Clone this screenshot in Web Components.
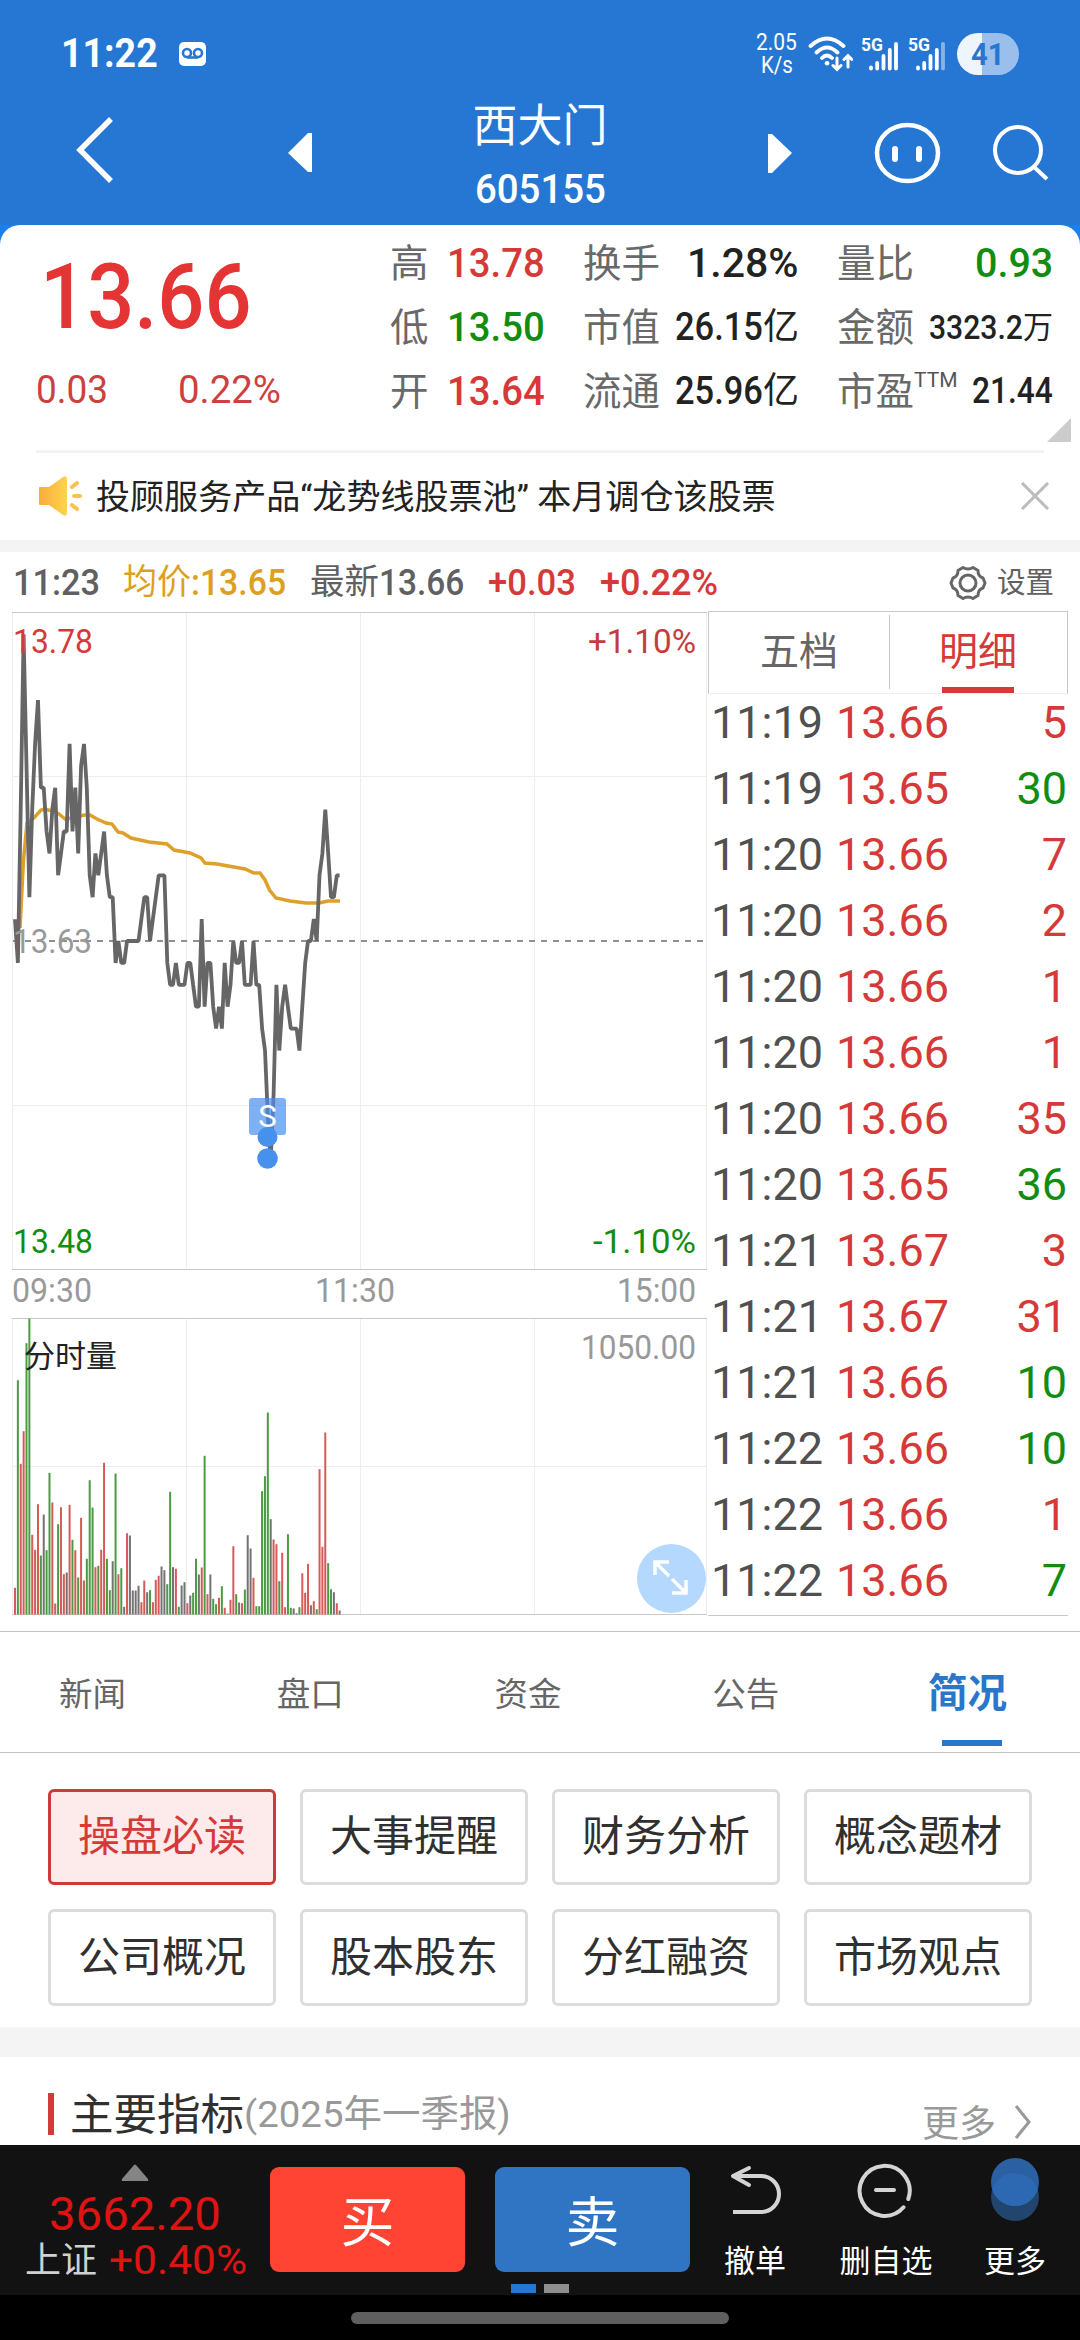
<!DOCTYPE html>
<html lang="zh-CN">
<head>
<meta charset="utf-8">
<title>西大门 605155</title>
<style>
  html, body { margin: 0; padding: 0; }
  body {
    width: 1080px;
    height: 2340px;
    overflow: hidden;
    background: #fff;
    font-family: Roboto, "Noto Sans CJK SC", sans-serif;
  }
</style>
</head>
<body>
<stock-app></stock-app>

<script>
const RED = "#d53a38";
const GREEN = "#128d12";

// text squeezed or stretched to a fixed width, for the narrow numerals
class FitText extends HTMLElement {
  constructor() {
    super();
    this.attachShadow({ mode: "open" });
    this.shadowRoot.innerHTML = `
      <style>
        :host { display: block; flex: none; line-height: 1.2; white-space: nowrap; }
        span { display: inline-block; transform-origin: 0 50%; vertical-align: top; }
      </style>
      <span><slot></slot></span>
    `;
  }

  connectedCallback() {
    const span = this.shadowRoot.querySelector("span");
    const width = Number(this.getAttribute("w"));
    if (this.hasAttribute("size")) this.style.fontSize = `${this.getAttribute("size")}px`;
    this.style.width = `${width}px`;
    const natural = span.offsetWidth;
    if (natural) span.style.transform = `scaleX(${width / natural})`;
  }
}
customElements.define("fit-text", FitText);

class StatusBar extends HTMLElement {
  constructor() {
    super();
    this.attachShadow({ mode: "open" });
    this.shadowRoot.innerHTML = `
      <style>
        :host { display: flex; align-items: center; height: 108px; padding: 0 61px 0 61px; box-sizing: border-box; color: #fff; }
        .time { font-weight: 700; }
        .mail { margin-left: 21px; }
        .rate { margin-left: auto; display: flex; flex-direction: column; align-items: center; margin-right: 11px; }
        .rate fit-text { line-height: 23px; }
        .sig { margin-left: 8px; display: flex; }
        .battery { margin-left: 11px; width: 62px; height: 42px; border-radius: 21px; background: linear-gradient(90deg, #eef5fd 25px, #9abfec 25px); display: flex; align-items: center; justify-content: center; color: #2577d3; font-weight: 700; }
      </style>
      <fit-text class="time" w="97" size="41">11:22</fit-text>
      <svg class="mail" width="27" height="24" viewBox="0 0 27 24">
        <rect width="27" height="24" rx="5" fill="#fff"/>
        <g fill="none" stroke="#2577d3" stroke-width="2.6"><circle cx="8" cy="11" r="4"/><circle cx="19" cy="11" r="4"/><path d="M8 15.5h11"/></g>
      </svg>
      <div class="rate"><fit-text w="41" size="23">2.05</fit-text><fit-text w="32" size="23">K/s</fit-text></div>
      <svg width="45" height="36" viewBox="0 0 45 36" fill="none" stroke="#fff" stroke-width="3.8" stroke-linecap="round">
        <path d="M2.500 10Q19-5 35.500 10M8.500 16.500Q19 6.500 29.500 16.500M14 22q5-5 10 0"/>
        <path d="M19 27.200h.1" stroke-width="4.500"/>
        <path d="M29 22v11M25 29.500l4 4 4-4M40 31V20M36 23.500l4-4 4 4" stroke-width="3"/>
      </svg>
      <svg class="sig" width="40" height="36" viewBox="0 0 40 36" stroke="#fff" stroke-width="3.8" stroke-linecap="round">
        <text x="0" y="15" font-size="18" font-weight="700" fill="#fff" stroke="none" textLength="22" lengthAdjust="spacingAndGlyphs">5G</text>
        <path d="M10 31.500v1M16.200 27v5.500M22.500 20v12.500M28.800 14v18.500M35 8v24.500"/>
      </svg>
      <svg class="sig" width="38" height="36" viewBox="0 0 38 36" stroke="#fff" stroke-width="3.8" stroke-linecap="round" style="margin-left:7px">
        <text x="0" y="15" font-size="18" font-weight="700" fill="#fff" stroke="none" textLength="22" lengthAdjust="spacingAndGlyphs">5G</text>
        <path d="M10 31.500v1M16.200 27v5.500M22.500 20v12.500M28.800 14v18.500"/><path d="M35 8v24.500" opacity=".45"/>
      </svg>
      <div class="battery"><fit-text w="34" size="32">41</fit-text></div>
    `;
  }
}
customElements.define("status-bar", StatusBar);

class StockHeader extends HTMLElement {
  constructor() {
    super();
    this.attachShadow({ mode: "open" });
    this.shadowRoot.innerHTML = `
      <style>
        :host { display: block; height: 225px; background: #2577d3; color: #fff; }
        nav { display: grid; grid-template-columns: 211px 178px 302px 176px 106px 107px; height: 117px; }
        svg { display: block; }
        .back { margin: 8px 0 0 75px; }
        .prev { margin: 25px 0 0 77px; }
        .next { margin: 26px 0 0 77px; }
        .bot { margin: 13px 0 0 6px; }
        .search { margin: 16px 0 0 18px; }
        .name { display: flex; flex-direction: column; align-items: center; }
        .name .cn { line-height: 62px; margin-top: -12px; }
        .name .code { font-weight: 500; line-height: 60px; margin-top: 1px; }
      </style>
      <status-bar></status-bar>
      <nav>
        <svg class="back" width="40" height="68"><path d="M36 3 5 34 36 65" fill="none" stroke="#fff" stroke-width="5.500"/></svg>
        <svg class="prev" width="24" height="39"><path d="M24 0v39h-4L0 20 20 0z" fill="#fff"/></svg>
        <div class="name"><fit-text class="cn" w="135" size="45">西大门</fit-text><fit-text class="code" w="131" size="41">605155</fit-text></div>
        <svg class="next" width="24" height="39"><path d="M0 0v39h4l20-20L4 0z" fill="#fff"/></svg>
        <svg class="bot" width="70" height="64" fill="none" stroke="#fff"><rect x="4" y="4" width="61" height="56" rx="30.500" ry="28" stroke-width="4.500"/><path d="M22 28v10M46 28v10" stroke-width="6" stroke-linecap="round"/></svg>
        <svg class="search" width="58" height="60" fill="none" stroke="#fff" stroke-width="4"><circle cx="27" cy="26" r="23"/><path d="M42 42l14 13"/></svg>
      </nav>
    `;
  }
}
customElements.define("stock-header", StockHeader);

class StatRow extends HTMLElement {
  constructor() {
    super();
    this.attachShadow({ mode: "open" });
    this.shadowRoot.innerHTML = `
      <style>
        :host { display: flex; align-items: center; height: 64px; color: #222; font-weight: 500; font-size: 38.500px; }
        .label { color: #696969; font-weight: 400; line-height: 1; white-space: nowrap; }
        slot { display: flex; align-items: center; margin-left: auto; }
        sup { font-size: 21px; line-height: 1; margin-top: -24px; color: #555; font-weight: 400; vertical-align: baseline; }
      </style>
      <span class="label">${this.getAttribute("label")}</span>
      ${this.hasAttribute("note") ? `<sup>${this.getAttribute("note")}</sup>` : ""}
      <slot></slot>
    `;
  }
}
customElements.define("stat-row", StatRow);

class QuotePanel extends HTMLElement {
  constructor() {
    super();
    this.attachShadow({ mode: "open" });
    this.shadowRoot.innerHTML = `
      <style>
        :host { display: block; height: 225px; background: #1b7ff0; }
        .card { height: 225px; box-sizing: border-box; background: #fff; border-radius: 20px 20px 0 0; padding: 7px 27px 0 36px; display: grid; grid-template-columns: 354px 155px 216px 216px; position: relative; }
        .price { height: 128px; display: flex; align-items: center; color: #e43434; font-weight: 500; padding-left: 4px; }
        .price fit-text { margin-top: 3px; }
        .change { height: 62px; display: flex; align-items: center; gap: 70px; color: #cd4040; }
        .c2 { margin-left: 38px; margin-right: -38px; }
        .c3 { margin-left: 76px; margin-right: -76px; }
        .up { color: ${RED}; }
        .down { color: ${GREEN}; }
        .cn { font-weight: 400; }
        .corner { position: absolute; right: 9px; bottom: 8px; }
      </style>
      <div class="card">
        <div>
          <div class="price"><fit-text w="212" size="90">13.66</fit-text></div>
          <div class="change"><fit-text w="72" size="38">0.03</fit-text><fit-text w="103" size="38">0.22%</fit-text></div>
        </div>
        <div>
          <stat-row label="高"><fit-text class="up" w="98" size="41">13.78</fit-text></stat-row>
          <stat-row label="低"><fit-text class="down" w="98" size="41">13.50</fit-text></stat-row>
          <stat-row label="开"><fit-text class="up" w="98" size="41">13.64</fit-text></stat-row>
        </div>
        <div class="c2">
          <stat-row label="换手"><fit-text w="112" size="41">1.28%</fit-text></stat-row>
          <stat-row label="市值"><fit-text w="88" size="38">26.15</fit-text><fit-text class="cn" w="36" size="36">亿</fit-text></stat-row>
          <stat-row label="流通"><fit-text w="88" size="38">25.96</fit-text><fit-text class="cn" w="36" size="36">亿</fit-text></stat-row>
        </div>
        <div class="c3">
          <stat-row label="量比"><fit-text class="down" w="78" size="41">0.93</fit-text></stat-row>
          <stat-row label="金额"><fit-text w="94" size="33">3323.2</fit-text><fit-text class="cn" w="30" size="31">万</fit-text></stat-row>
          <stat-row label="市盈" note="TTM"><fit-text w="81" size="36">21.44</fit-text></stat-row>
        </div>
        <svg class="corner" width="24" height="24"><path d="M24 0v24H0z" fill="#ccc"/></svg>
      </div>
    `;
  }
}
customElements.define("quote-panel", QuotePanel);

class NoticeBar extends HTMLElement {
  constructor() {
    super();
    this.attachShadow({ mode: "open" });
    this.shadowRoot.innerHTML = `
      <style>
        :host { display: block; padding: 0 36px; height: 102px; box-sizing: border-box; border-bottom: 12px solid #f4f4f4; color: #222; }
        .row { display: flex; align-items: center; height: 86px; border-top: 3px solid #f3f3f3; }
        fit-text { margin: 2px 0 0 14px; }
        .close { margin: 0 -6px 0 auto; }
      </style>
      <div class="row">
        <svg width="46" height="42" viewBox="0 0 46 42">
          <defs><linearGradient id="horn"><stop stop-color="#f7ad3c"/><stop offset="1" stop-color="#ffd34e"/></linearGradient></defs>
          <path d="M4 12h9L27 2q4-2 4 2v34q0 4-4 2L13 30H4q-1 0-1-1V13q0-1 1-1z" fill="url(#horn)"/>
          <path d="M36 12l5-4M38 21h6M36 30l5 4" stroke="#fbc34c" stroke-width="4" stroke-linecap="round"/>
        </svg>
        <fit-text w="680" size="34"><slot></slot></fit-text>
        <svg class="close" width="30" height="28" stroke="#bbb" stroke-width="3"><path d="M2 1l26 26M28 1L2 27"/></svg>
      </div>
    `;
  }
}
customElements.define("notice-bar", NoticeBar);

class QuoteInfo extends HTMLElement {
  constructor() {
    super();
    this.attachShadow({ mode: "open" });
    this.shadowRoot.innerHTML = `
      <style>
        :host { display: flex; align-items: center; height: 60px; padding: 2px 26px 0 13px; box-sizing: border-box; color: #606060; font-weight: 500; font-size: 36px; }
        .cn { font-weight: 400; }
        .avg { color: #dd9f21; margin-left: 23px; }
        .new { margin-left: 24px; }
        .up { color: ${RED}; margin-left: 24px; }
        svg { margin-left: auto; }
        .set { font-weight: 400; margin-left: 10px; }
      </style>
      <fit-text w="87" size="37">11:23</fit-text>
      <fit-text class="avg cn" w="68" size="35">均价</fit-text><fit-text style="color:#dd9f21" w="95" size="37">:13.65</fit-text>
      <fit-text class="new cn" w="69" size="35">最新</fit-text><fit-text w="85" size="37">13.66</fit-text>
      <fit-text class="up" w="88" size="37">+0.03</fit-text>
      <fit-text class="up" w="118" size="37">+0.22%</fit-text>
      <svg width="38" height="36" viewBox="0 0 38 36" fill="none" stroke="#666" stroke-width="3">
        <path d="M14 2.500q5 3 10 0l5 3q0 6 5 7.500l2 5-2 5q-5 1.500-5 7.500l-5 3q-5-3-10 0l-5-3q0-6-5-7.500L2 18l2-5q5-1.500 5-7.500z" stroke-linejoin="round"/>
        <circle cx="19" cy="18" r="8"/>
      </svg>
      <fit-text class="set" w="57" size="29">设置</fit-text>
    `;
  }
}
customElements.define("quote-info", QuoteInfo);

// one entry per minute, in cents from the previous close of 13.63
const prices = [
  1, -1, 6, 14, 8, 2, 6, 9, 11, 7, 7, 5, 4, 6, 7, 3, 4, 5, 5, 9, 5, 7, 4, 8, 9, 7, 3, 2, 4, 3,
  4, 5, 3, 2, 2, -1, 0, -1, -1, 0, 0, 0, 0, 0, 1, 2, 2, 0, 1, 2, 3, 3, 3, -1, -2, -2, -1, -2, -2, -2,
  -1, -1, -2, -3, -3, 1, -3, -1, -1, -3, -4, -3, -4, -1, -3, -2, 0, -1, -1, 0, -2, -2, -2, 0, -2, -2, -4, -5, -8, -10,
  -7, -2, -5, -3, -2, -3, -4, -4, -4, -5, -3, -1, 0, 0, 1, 0, 3, 4, 6, 4, 2, 2, 3, 3,
];

const average = "20,928 23.5,860 27,823 34,818 41,810 45,809 52,811 59,814 65,819 72,818 84,815 90,815 97,819 106,823 112,824 118,832 123,833 131,838 149,842 167,844 174,850 190,853 201,858 205,863 217,864 245,869 254,873 260,873 265,880 269.5,890 276,898 290,901 306,903 319,903 328,901 340,901";

// r = up, g = down, k = flat; the number is the bar height in thirds of a pixel
const volumes = `r80 g703 r452 r550 g814 g888 r239 r194 r331 g177 k300 g193 g425 r336 r33 g271 r322 r121 k126 r329
  g224 r193 g111 r290 r102 g167 g403 g321 r142 g146 r194 r455 g167 g73 k160 g423 r121 g139 k23 r244
  k237 k72 k72 k86 r37 r102 k67 g73 r37 r104 r116 k144 k133 g91 g368 k142 r137 g23 k87 k97
  r34 k57 g65 g167 k120 r141 g476 r61 k120 g47 g31 r50 g85 r20 g3 r44 r205 g61 k36 r34
  g75 k238 k198 r110 g25 g25 g370 g415 g606 k286 r225 r211 g100 r185 r22 g241 g20 k18 k4 g22
  r124 r65 r152 k28 r40 g16 r436 r203 r546 g154 g76 k67 r34 k12`.split(/\s+/);

const minuteX = (i) => 15 + i * 2.873;

class TrendChart extends HTMLElement {
  constructor() {
    super();
    this.attachShadow({ mode: "open" });
    this.render();
  }

  label(x, y, width, text, color, size = 34) {
    return `<text x="${x}" y="${y}" font-size="${size}" fill="${color}" textLength="${width}" lengthAdjust="spacingAndGlyphs">${text}</text>`;
  }

  render() {
    const line = prices.map((p, i) => `${minuteX(i).toFixed(1)},${(941 - p * 21.9).toFixed(1)}`).join(" ");
    const colors = { r: "#d65a58", g: "#4b9b43", k: "#737373" };
    const bars = volumes.map((v, i) => {
      const h = Number(v.slice(1)) / 3;
      return `<rect x="${(minuteX(i) - 1).toFixed(2)}" y="${(1614.5 - h).toFixed(1)}" width="2" height="${h.toFixed(1)}" fill="${colors[v[0]]}"/>`;
    }).join("");

    this.shadowRoot.innerHTML = `
      <style>
        :host { display: block; width: 708px; height: 1006px; }
        svg { display: block; }
      </style>
      <svg width="708" height="1006" viewBox="0 612 708 1006">
        <path d="M12.500 613V1269M186.500 613V1269M360.500 613V1269M534.500 613V1269M706.500 613V1269M12 776.500H707M12 1105.500H707" stroke="#ededed" fill="none"/>
        <path d="M12.500 1319V1614M186.500 1319V1614M360.500 1319V1614M534.500 1319V1614M706.500 1319V1614M12 1466.500H707" stroke="#ededed" fill="none"/>
        <path d="M12 612.500H707M12 1269.500H707M12 1318.500H707M12 1614.500H707" stroke="#c8c8c8"/>
        <path d="M13 941H704" stroke="#909090" stroke-width="2" stroke-dasharray="6 6"/>
        <polyline points="${average}" fill="none" stroke="#dda02a" stroke-width="3.500"/>
        <polyline points="${line}" fill="none" stroke="#666" stroke-width="3.800" stroke-linejoin="bevel"/>
        ${this.label(13, 653, 80, "13.78", RED)}
        ${this.label(588, 653, 108, "+1.10%", "#c43d3d")}
        ${this.label(13, 953, 79, "13.63", "#999")}
        ${this.label(13, 1253, 80, "13.48", GREEN)}
        ${this.label(593, 1253, 103, "-1.10%", GREEN)}
        ${this.label(12, 1302, 80, "09:30", "#999")}
        ${this.label(315, 1302, 80, "11:30", "#999")}
        ${this.label(617, 1302, 79, "15:00", "#999")}
        <rect x="249" y="1098" width="37" height="37" rx="3" fill="#4690ee" opacity=".7"/>
        <circle cx="267.500" cy="1137" r="10" fill="#4690ee"/><circle cx="267.500" cy="1158.500" r="10.300" fill="#4690ee"/>
        <text x="267.500" y="1127" font-size="31" fill="#fff" text-anchor="middle">S</text>
        ${bars}
        ${this.label(24, 1367, 93, "分时量", "#222", 31)}
        ${this.label(581, 1359, 115, "1050.00", "#999")}
        <circle cx="671.500" cy="1578.500" r="34.500" fill="#b5d8ff"/>
        <path d="M655 1575v-13h14M655 1562l14 14M686 1580v13h-14M686 1593l-14-14" fill="none" stroke="#fff" stroke-width="3.500"/>
      </svg>
    `;
  }
}
customElements.define("trend-chart", TrendChart);

const trades = [
  ["11:19", "13.66", 5, "up"], ["11:19", "13.65", 30, "down"], ["11:20", "13.66", 7, "up"],
  ["11:20", "13.66", 2, "up"], ["11:20", "13.66", 1, "up"], ["11:20", "13.66", 1, "up"],
  ["11:20", "13.66", 35, "up"], ["11:20", "13.65", 36, "down"], ["11:21", "13.67", 3, "up"],
  ["11:21", "13.67", 31, "up"], ["11:21", "13.66", 10, "down"], ["11:22", "13.66", 10, "down"],
  ["11:22", "13.66", 1, "up"], ["11:22", "13.66", 7, "down"],
];

class TradeList extends HTMLElement {
  constructor() {
    super();
    this.attachShadow({ mode: "open" });
    const rows = trades.map(([time, price, count, dir]) => `
      <div class="row"><span class="time">${time}</span><span class="price">${price}</span><span class="${dir}">${count}</span></div>`).join("");
    this.shadowRoot.innerHTML = `
      <style>
        :host { display: block; width: 360px; height: 1004px; border-bottom: 1px solid #c8c8c8; margin-top: -1px; }
        .tabs { display: grid; grid-template-columns: 180px 178px; height: 81px; border: 1px solid #c8c8c8; border-bottom-color: #eee; font-size: 39px; line-height: 80px; color: #666; text-align: center; }
        .tabs div + div { color: ${RED}; display: flex; flex-direction: column; align-items: center; background: linear-gradient(#c8c8c8, #c8c8c8) 0 3px / 1px 74px no-repeat; }
        .tabs b { font-weight: 400; height: 75px; }
        .tabs i { width: 72px; height: 6px; background: ${RED}; }
        .list { margin-top: -4px; }
        .row { display: grid; grid-template-columns: 125px 1fr auto; height: 66px; padding: 0 1px 0 3px; font-size: 45px; line-height: 66px; color: #505050; }
        .price, .up { color: ${RED}; }
        .down { color: ${GREEN}; }
      </style>
      <div class="tabs"><div>五档</div><div><b>明细</b><i></i></div></div>
      <div class="list">${rows}</div>
    `;
  }
}
customElements.define("trade-list", TradeList);

class SectionTabs extends HTMLElement {
  constructor() {
    super();
    this.attachShadow({ mode: "open" });
    this.shadowRoot.innerHTML = `
      <style>
        :host { display: flex; justify-content: space-between; height: 120px; padding: 0 73px 0 59px; border-top: 1px solid #c4c4c4; border-bottom: 1px solid #c4c4c4; font-size: 33.5px; line-height: 125px; color: #666; }
        .on { display: flex; flex-direction: column; align-items: center; font-size: 39.500px; font-weight: 700; color: #2a76ca; margin-left: -2px; }
        .on span { height: 108px; line-height: 123px; }
        .on i { width: 60px; height: 6px; background: #2a76ca; margin-left: 9px; }
      </style>
      <div>新闻</div><div>盘口</div><div>资金</div><div>公告</div><div class="on"><span>简况</span><i></i></div>
    `;
  }
}
customElements.define("section-tabs", SectionTabs);

class TopicChip extends HTMLElement {
  constructor() {
    super();
    this.attachShadow({ mode: "open" });
    this.shadowRoot.innerHTML = `
      <style>
        :host { display: flex; align-items: center; justify-content: center; box-sizing: border-box; border: 3px solid #dcdcdc; border-radius: 6px; font-size: 42px; line-height: 1; color: #303030; white-space: nowrap; }
        :host([active]) { background: #fdeaea; border-color: #c93c3c; color: ${RED}; }
      </style>
      <slot></slot>
    `;
  }
}
customElements.define("topic-chip", TopicChip);

class ProfileSection extends HTMLElement {
  constructor() {
    super();
    this.attachShadow({ mode: "open" });
    this.shadowRoot.innerHTML = `
      <style>
        :host { display: block; height: 392px; }
        .chips { display: grid; grid-template-columns: repeat(4, 228px); grid-template-rows: 96px 97px; gap: 24px; padding: 36px 48px 21px; border-bottom: 30px solid #f4f4f4; }
        .title { display: flex; align-items: center; height: 42px; margin-top: 36px; padding: 0 48px; color: #303030; white-space: nowrap; }
        .title i { width: 6px; height: 42px; background: ${RED}; margin-right: 16px; }
        .title fit-text { margin-top: 3px; }
        .title .sub { color: #999; }
        .title .more { color: #999; font-size: 37px; margin: 13px 18px 0 auto; }
        .title svg { margin-top: 16px; }
      </style>
      <div class="chips">
        <topic-chip active>操盘必读</topic-chip><topic-chip>大事提醒</topic-chip><topic-chip>财务分析</topic-chip><topic-chip>概念题材</topic-chip>
        <topic-chip>公司概况</topic-chip><topic-chip>股本股东</topic-chip><topic-chip>分红融资</topic-chip><topic-chip>市场观点</topic-chip>
      </div>
      <div class="title">
        <i></i><fit-text w="174" size="43">主要指标</fit-text><fit-text class="sub" w="267" size="37">(2025年一季报)</fit-text>
        <span class="more">更多</span>
        <svg width="18" height="34" fill="none" stroke="#999" stroke-width="3"><path d="M2 1l13 16L2 33"/></svg>
      </div>
    `;
  }
}
customElements.define("profile-section", ProfileSection);

class BottomBar extends HTMLElement {
  constructor() {
    super();
    this.attachShadow({ mode: "open" });
    this.shadowRoot.innerHTML = `
      <style>
        :host { display: block; height: 195px; background: #000; color: #fff; }
        .bar { display: flex; height: 150px; background: #121212; position: relative; }
        .index { width: 270px; display: flex; flex-direction: column; align-items: center; color: #e01212; }
        .index svg { margin-top: 18px; }
        .index .value { line-height: 48px; margin-top: 9px; }
        .index .line { display: flex; gap: 12px; margin: 1px 0 0 2px; }
        .index .line fit-text { line-height: 44px; }
        .index .cn { color: #d0d0d0; }
        .btn { width: 195px; height: 105px; margin: 22px 30px 0 0; border-radius: 9px; background: #ff4433; font-size: 54px; line-height: 113px; text-align: center; }
        .sell { background: #2f75c3; margin-right: 15px; }
        .tool { display: flex; flex-direction: column; align-items: center; font-size: 31px; line-height: 40px; padding-top: 12px; width: 100px; white-space: nowrap; }
        .tool svg { margin-bottom: 17px; flex: none; }
        .tool.mid { margin: 0 30px 0 31px; }
        .tool.last { width: 98px; }
        .pager { position: absolute; left: 511px; top: 139px; display: flex; gap: 8px; }
        .pager i { width: 25px; height: 9px; background: #2577d3; }
        .pager i + i { background: #8e8e8e; }
        .handle { width: 378px; height: 12px; border-radius: 6px; background: #5f5f5f; margin: 17px auto 0; }
      </style>
      <div class="bar">
        <div class="index">
          <svg width="30" height="18"><path d="M2 16 14 2q1-1 2 0l12 14q1 2-1 2H3q-2 0-1-2z" fill="#858585"/></svg>
          <fit-text class="value" w="172" size="47">3662.20</fit-text>
          <div class="line"><fit-text class="cn" w="72" size="36">上证</fit-text><fit-text w="138" size="40">+0.40%</fit-text></div>
        </div>
        <div class="btn">买</div>
        <div class="btn sell">卖</div>
        <div class="tool">
          <svg width="56" height="68" viewBox="0 0 56 68" fill="none" stroke="#d4d4d4" stroke-width="4"><path d="M22 11 6 19 22 28" stroke-linecap="round" stroke-linejoin="round"/><path d="M6 19H34a18 18 0 0 1 0 36H6"/></svg>
          撤单
        </div>
        <div class="tool mid">
          <svg width="60" height="68" viewBox="0 0 60 68" fill="none" stroke="#d4d4d4" stroke-width="4" stroke-linecap="round"><path d="M52.300 42A25 25 0 1 0 47.500 50.300M20 33H38"/></svg>
          删自选
        </div>
        <div class="tool last">
          <svg width="52" height="68" viewBox="0 0 52 68"><circle cx="26" cy="40" r="24" fill="#22456e"/><circle cx="26" cy="25" r="24" fill="#2b60a2"/><path d="M3.200 32.500a24 24 0 0 1 45.600 0 24 24 0 0 1-45.600 0z" fill="#2c69b2"/></svg>
          更多
        </div>
        <div class="pager"><i></i><i></i></div>
      </div>
      <div class="handle"></div>
    `;
  }
}
customElements.define("bottom-bar", BottomBar);

class StockApp extends HTMLElement {
  constructor() {
    super();
    this.attachShadow({ mode: "open" });
    this.shadowRoot.innerHTML = `
      <style>
        :host { display: flex; flex-direction: column; width: 1080px; height: 2340px; overflow: hidden; background: #fff; }
        :host > * { flex: none; }
        .market { display: flex; flex: none; height: 1019px; }
        bottom-bar { margin-top: auto; }
      </style>
      <stock-header></stock-header>
      <quote-panel></quote-panel>
      <notice-bar>投顾服务产品“龙势线股票池” 本月调仓该股票</notice-bar>
      <quote-info></quote-info>
      <div class="market"><trend-chart></trend-chart><trade-list></trade-list></div>
      <section-tabs></section-tabs>
      <profile-section></profile-section>
      <bottom-bar></bottom-bar>
    `;
  }
}
customElements.define("stock-app", StockApp);
</script>
</body>
</html>
